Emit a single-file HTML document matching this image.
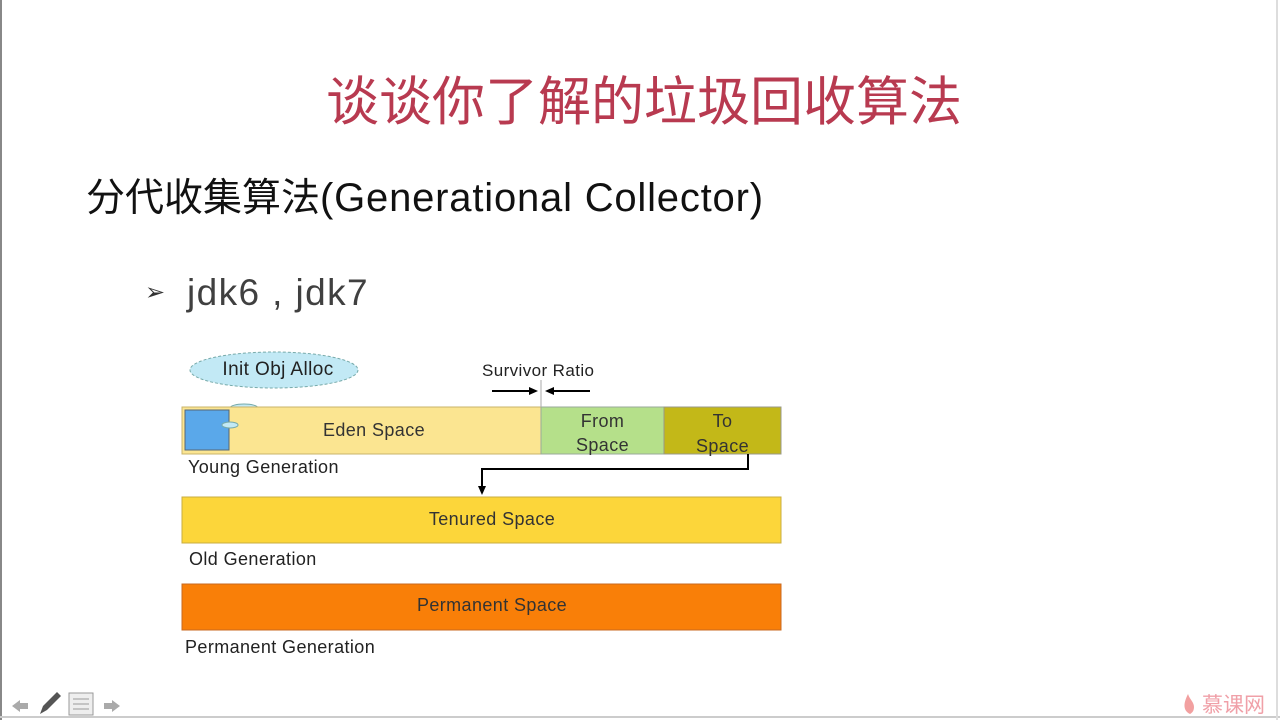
<!DOCTYPE html>
<html><head><meta charset="utf-8"><style>
body{margin:0;width:1280px;height:720px;overflow:hidden;background:#fff;position:relative;font-family:"Liberation Sans","Noto Sans CJK SC",sans-serif}
.a{position:absolute;white-space:nowrap}
.d{font-size:18px;letter-spacing:0.4px}
</style></head><body>
<div class="a" style="left:0;top:0;width:2px;height:720px;background:#888"></div>
<div class="a" style="left:0;top:716px;width:1280px;height:2px;background:#ccc"></div>
<div class="a" style="left:1276px;top:0;width:2px;height:720px;background:#ddd"></div>
<div class="a" style="left:326px;top:65px;font-size:53px;line-height:66px;color:#b83a50;font-family:'Noto Sans CJK SC',sans-serif">谈谈你了解的垃圾回收算法</div>
<div class="a" style="left:86px;top:170px;font-size:40px;line-height:50px;color:#111;letter-spacing:0.8px"><span style="font-family:'Noto Sans CJK SC',sans-serif;font-size:39px;letter-spacing:0">分代收集算法</span>(Generational Collector)</div>
<div class="a" style="left:145px;top:278px;font-size:24px;color:#333">➢</div>
<div class="a" style="left:187px;top:270px;font-size:37px;line-height:46px;color:#404040;letter-spacing:1.4px">jdk6 , jdk7</div>
<svg class="a" style="left:0;top:0" width="1280" height="720">
<ellipse cx="274" cy="370" rx="84" ry="18" fill="#c2e9f5" stroke="#7aa" stroke-dasharray="3,2"/>
<ellipse cx="244" cy="408" rx="14" ry="4" fill="#c2e9f5" stroke="#7aa"/>
<rect x="182" y="407" width="359" height="47" fill="#fbe591" stroke="#c9b46a"/>
<rect x="541" y="407" width="123" height="47" fill="#b5e08a" stroke="#9a9"/>
<rect x="664" y="407" width="117" height="47" fill="#c3b818" stroke="#998"/>
<rect x="185" y="410" width="44" height="40" fill="#5aa8ea" stroke="#567"/>
<ellipse cx="230" cy="425" rx="8" ry="3" fill="#c2e9f5" stroke="#7aa"/>
<line x1="541" y1="380" x2="541" y2="407" stroke="#aaa"/>
<line x1="492" y1="391" x2="532" y2="391" stroke="#000" stroke-width="2"/><path d="M538 391l-9-4v8z"/>
<line x1="554" y1="391" x2="590" y2="391" stroke="#000" stroke-width="2"/><path d="M545 391l9-4v8z"/>
<path d="M748 454V469H482V488" fill="none" stroke="#000" stroke-width="2"/><path d="M482 495l-4-9h8z"/>
<rect x="182" y="497" width="599" height="46" fill="#fcd63a" stroke="#c9ad40"/>
<rect x="182" y="584" width="599" height="46" fill="#f97f08" stroke="#c86a20"/>
<path d="M20 700l-8 6 8 6v-3h8v-6h-8z" fill="#aaa"/>
<path d="M40 714l3-8 14-14 4 4-14 14z" fill="#555"/>
<rect x="69" y="693" width="24" height="22" fill="#eee" stroke="#999"/>
<path d="M73 699h16M73 704h16M73 709h16" stroke="#999"/>
<path d="M112 700l8 6-8 6v-3h-8v-6h8z" fill="#aaa"/>
<path d="M1190 714c-8-4-6-12-2-20 2 6 6 8 6 13 0 4-2 6-4 7z" fill="#f2a0a0"/>
</svg>
<div class="a d" style="left:183px;top:359px;width:190px;text-align:center;font-size:19px;color:#222">Init Obj Alloc</div>
<div class="a d" style="left:482px;top:361px;font-size:17px;color:#222">Survivor Ratio</div>
<div class="a d" style="left:182px;top:420px;width:384px;text-align:center;color:#333">Eden Space</div>
<div class="a d" style="left:541px;top:409px;width:123px;text-align:center;line-height:24px;color:#333">From<br>Space</div>
<div class="a d" style="left:664px;top:409px;width:117px;text-align:center;line-height:25px;color:#333">To<br>Space</div>
<div class="a d" style="left:188px;top:457px;color:#222">Young Generation</div>
<div class="a d" style="left:182px;top:509px;width:620px;text-align:center;color:#333">Tenured Space</div>
<div class="a d" style="left:189px;top:549px;color:#222">Old Generation</div>
<div class="a d" style="left:182px;top:595px;width:620px;text-align:center;color:#333">Permanent Space</div>
<div class="a d" style="left:185px;top:637px;color:#222">Permanent Generation</div>
<div class="a" style="left:1202px;top:689px;font-size:21px;color:#f0a0a8;font-family:'Noto Sans CJK SC',sans-serif">慕课网</div>
</body></html>
